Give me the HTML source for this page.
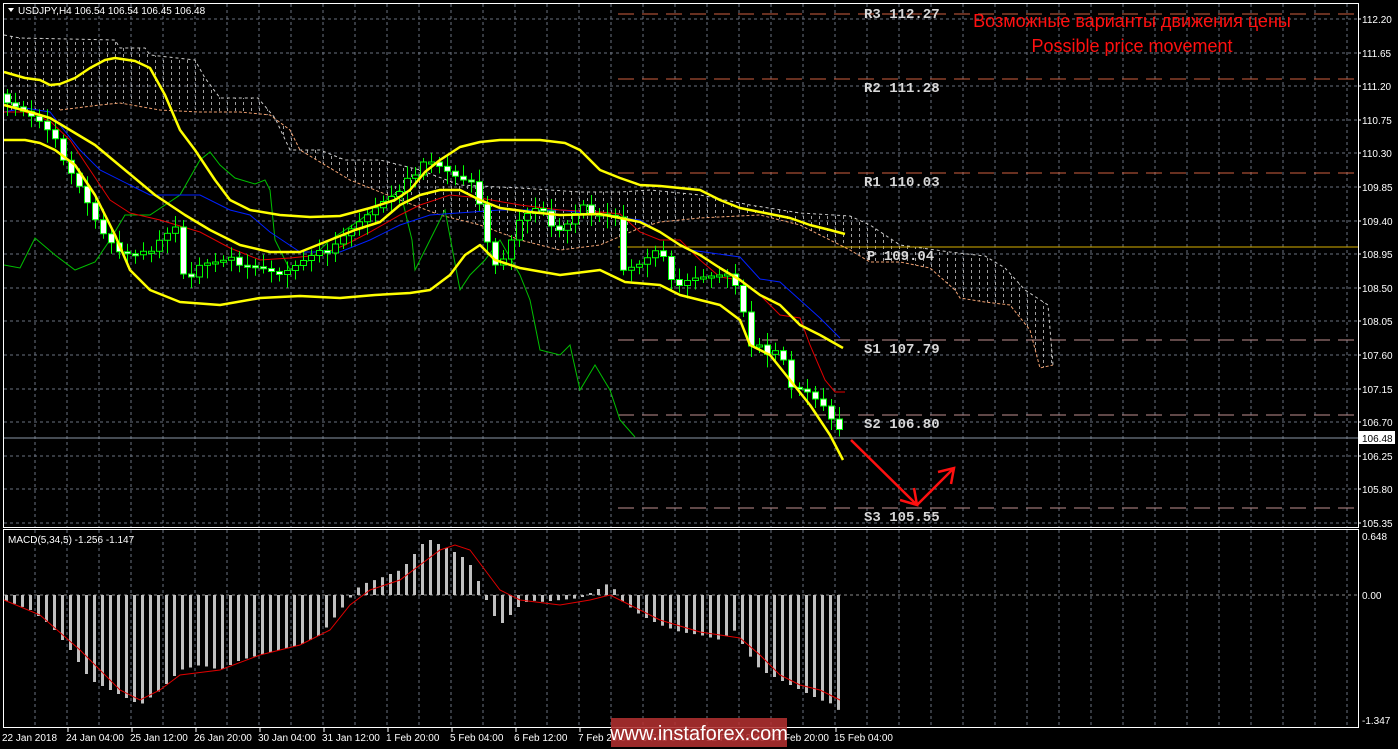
<!DOCTYPE html>
<html><head><meta charset="utf-8">
<style>
html,body{margin:0;padding:0;background:#000;width:1398px;height:749px;overflow:hidden}
svg{display:block}
text{font-family:"Liberation Sans",sans-serif}
.ax{fill:#fff;font-size:10px}
.pv{fill:#d8d8d8;font-family:"Liberation Mono",monospace;font-size:14px;font-weight:bold}
</style></head><body>
<svg id="s" width="1398" height="749" viewBox="0 0 1398 749" xmlns="http://www.w3.org/2000/svg">
<defs>
<pattern id="hatch" width="8" height="6" patternUnits="userSpaceOnUse">
<rect x="3" y="0" width="1" height="3" fill="#bbb"/>
</pattern>
</defs>
<rect width="1398" height="749" fill="#000"/>
<g id="grid"></g>
<polygon fill="url(#hatch)" opacity="0.85" points="4,35 20,38 115,40 120,48 145,48 150,55 195,60 205,78 220,98 258,98 275,118 290,150 320,150 345,160 380,160 420,170 460,185 520,188 580,192 620,192 650,190 700,195 750,205 800,213 850,216 870,225 900,245 950,252 985,256 1005,268 1025,290 1048,305 1053,365 1040,368 1030,330 1010,305 985,302 960,298 955,290 930,268 900,262 870,262 850,250 800,225 760,215 700,218 660,222 640,228 600,245 560,250 520,240 480,225 440,215 400,200 350,180 300,150 290,130 270,115 240,112 200,110 160,108 130,103 100,105 60,110 4,110"/>
<polyline fill="none" stroke="#f0a070" stroke-width="1" stroke-dasharray="3,2" points="60,110 100,105 120,103 160,110 200,112 240,112 270,115 290,130 300,150 350,180 400,200 440,215 480,225 520,240 560,250 600,245 640,228 660,222 700,218 760,215 800,225 850,250 870,262 900,262 930,268 955,290 960,298 985,302 1010,305 1030,330 1040,368 1053,365"/>
<polyline fill="none" stroke="#ccc" stroke-width="1" stroke-dasharray="3,3" points="4,35 20,38 115,40 120,48 145,48 150,55 195,60 205,78 220,98 258,98 275,118 290,150 320,150 345,160 380,160 420,170 460,185 520,188 580,192 620,192 650,190 700,195 750,205 800,213 850,216 870,225 900,245 950,252 985,256 1005,268 1025,290 1048,305 1053,365"/>
<g stroke-width="1">
<line x1="618" y1="14" x2="1358" y2="14" stroke="#d06040" stroke-dasharray="16,8"/>
<line x1="618" y1="79" x2="1358" y2="79" stroke="#d06040" stroke-dasharray="16,8"/>
<line x1="618" y1="173" x2="1358" y2="173" stroke="#d06040" stroke-dasharray="16,8"/>
<line x1="618" y1="247" x2="1358" y2="247" stroke="#d8b000"/>
<line x1="618" y1="340" x2="1358" y2="340" stroke="#c09090" stroke-dasharray="16,8"/>
<line x1="618" y1="415" x2="1358" y2="415" stroke="#c09090" stroke-dasharray="16,8"/>
<line x1="618" y1="508" x2="1358" y2="508" stroke="#c09090" stroke-dasharray="16,8"/>
</g>
<line x1="4" y1="438" x2="1358" y2="438" stroke="#8a96a6" stroke-width="1"/>
<polyline fill="none" stroke="#00c000" stroke-width="1" points="4,265 20,268 35,238 55,255 75,270 95,262 110,240 125,215 150,215 180,195 200,160 210,152 220,165 235,178 255,184 265,180 270,190 275,240 290,270 310,260 330,240 360,220 400,190 412,240 415,270 430,240 445,210 460,290 470,275 485,260 500,240 520,275 530,300 540,350 560,355 570,345 580,390 595,365 610,390 620,420 635,437"/>
<polyline fill="none" stroke="#0020ff" stroke-width="1" points="4,112 25,108 50,112 60,125 80,150 100,170 130,185 150,195 180,195 200,195 230,210 250,215 270,232 300,252 340,252 370,240 400,225 430,215 500,210 560,210 600,215 640,220 690,250 740,257 760,279 780,282 800,300 820,318 840,338"/>
<polyline fill="none" stroke="#e00000" stroke-width="1" points="4,112 25,112 50,121 70,140 90,170 110,200 130,213 160,220 200,232 230,248 260,260 290,258 320,255 345,245 370,232 400,215 420,205 450,195 480,198 520,205 560,210 600,212 620,214 640,232 660,240 680,240 700,260 720,277 740,280 760,295 780,315 800,318 810,345 825,380 835,392 845,392"/>
<g id="candles"></g>
<g fill="none" stroke="#ffff00" stroke-width="2.5" stroke-linejoin="round">
<polyline points="4,72 25,78 40,80 50,85 60,84 75,78 90,68 105,60 115,58 135,61 150,68 165,95 180,130 195,150 215,180 230,200 250,210 280,215 310,217 340,216 370,208 395,200 410,190 425,172 440,160 460,147 480,142 500,140 540,140 565,143 580,150 600,170 620,178 640,185 660,186 680,188 700,190 720,200 740,208 770,214 790,218 810,225 830,230 845,234"/>
<polyline points="4,105 30,112 50,118 70,130 95,145 125,170 155,195 185,215 210,230 240,245 270,252 300,252 330,240 355,230 380,222 400,205 420,195 440,190 460,190 480,200 500,208 530,212 560,215 600,214 640,222 660,232 680,245 700,255 720,268 740,280 760,295 780,305 800,325 820,335 843,348"/>
<polyline points="4,140 25,140 40,143 55,150 75,165 95,195 115,235 130,270 150,290 180,302 220,305 260,298 300,296 340,298 375,295 410,293 430,290 450,275 465,255 480,245 495,260 520,268 560,275 600,270 625,282 660,285 680,295 700,300 720,305 740,320 750,345 770,355 790,380 810,405 830,435 843,460"/>
</g>
<rect x="3.5" y="3.5" width="1355" height="524" fill="none" stroke="#fff" stroke-width="1"/>
<rect x="3.5" y="529.5" width="1355" height="198" fill="none" stroke="#fff" stroke-width="1"/>
<line x1="4" y1="595" x2="1358" y2="595" stroke="#8a8a8a" stroke-dasharray="3,3"/>
<g id="macd"></g>
<polyline fill="none" stroke="#e00000" stroke-width="1" points="4,600 40,615 80,650 120,690 140,700 160,690 180,675 220,670 260,655 300,645 330,630 350,605 370,590 400,580 420,565 440,550 455,545 470,550 485,570 500,590 520,600 560,605 590,600 610,595 630,605 660,620 700,632 740,638 760,655 780,675 800,685 820,690 840,700"/>
<polygon points="8,8 14,8 11,12" fill="#fff"/>
<text x="18" y="14" class="ax">USDJPY,H4  106.54 106.54 106.45 106.48</text>
<text x="8" y="543" class="ax">MACD(5,34,5) -1.256 -1.147</text>
<text x="864" y="18" class="pv">R3 112.27</text>
<text x="864" y="92" class="pv">R2 111.28</text>
<text x="864" y="186" class="pv">R1 110.03</text>
<text x="867" y="260" class="pv">P 109.04</text>
<text x="864" y="353" class="pv">S1 107.79</text>
<text x="864" y="428" class="pv">S2 106.80</text>
<text x="864" y="521" class="pv">S3 105.55</text>
<text x="1132" y="27" fill="#ff1010" font-size="18" text-anchor="middle">Возможные варианты движения цены</text>
<text x="1132" y="52" fill="#ff1010" font-size="18" text-anchor="middle">Possible price movement</text>
<g stroke="#ff1010" stroke-width="2.5" fill="none" stroke-linejoin="miter">
<line x1="851" y1="440" x2="917" y2="505"/>
<polyline points="900,500 917,505 914,488"/>
<line x1="917" y1="505" x2="954" y2="468"/>
<polyline points="938,472 954,468 951,484"/>
</g>
<g id="axis" class="ax"></g>
<rect x="1359" y="431" width="36" height="13" fill="#fff"/>
<text x="1362" y="442" font-size="10" fill="#000">106.48</text>
<text x="1362" y="540" class="ax">0.648</text>
<text x="1362" y="599" class="ax">0.00</text>
<text x="1362" y="724" class="ax">-1.347</text>
<g id="time" class="ax"></g>
<rect x="611" y="718" width="176" height="29" fill="#b03030" opacity="0.88"/>
<text x="699" y="740" fill="#fff" font-size="20" text-anchor="middle">www.instaforex.com</text>
</svg>
<script>
(function(){
var NS="http://www.w3.org/2000/svg";
function el(p,t,a,txt){var e=document.createElementNS(NS,t);for(var k in a)e.setAttribute(k,a[k]);if(txt)e.textContent=txt;document.getElementById(p).appendChild(e);return e;}
for(var x=35;x<1358;x+=32){el("grid","line",{x1:x,y1:4,x2:x,y2:527,stroke:"#6a7280","stroke-dasharray":"3,3"});el("grid","line",{x1:x,y1:530,x2:x,y2:727,stroke:"#6a7280","stroke-dasharray":"3,3"});}
var prices=["112.20","111.65","111.20","110.75","110.30","109.85","109.40","108.95","108.50","108.05","107.60","107.15","106.70","106.25","105.80","105.35"];
for(var i=0;i<prices.length;i++){var y=Math.round(19+i*33.6);el("grid","line",{x1:4,y1:y,x2:1358,y2:y,stroke:"#6a7280","stroke-dasharray":"3,3"});el("axis","text",{x:1362,y:y+4},prices[i]);el("axis","line",{x1:1358,y1:y,x2:1361,y2:y,stroke:"#fff"});}
var tl=["22 Jan 2018","24 Jan 04:00","25 Jan 12:00","26 Jan 20:00","30 Jan 04:00","31 Jan 12:00","1 Feb 20:00","5 Feb 04:00","6 Feb 12:00","7 Feb 20:00","9 Feb 04:00","12 Feb 12:00","13 Feb 20:00","15 Feb 04:00"];
for(var i=0;i<tl.length;i++){var x=i==0?2:66+64*(i-1);el("time","text",{x:x,y:741},tl[i]);if(i>0)el("time","line",{x1:x+2,y1:728,x2:x+2,y2:732,stroke:"#fff"});}
var path=[[4,100],[20,110],[40,125],[60,150],[80,185],[100,230],[120,255],[140,260],[160,235],[175,225],[185,285],[200,265],[220,265],[240,260],[260,265],[280,275],[300,265],[320,255],[340,235],[360,220],[380,205],[400,195],[415,170],[425,155],[440,165],[460,180],[475,185],[485,240],[495,270],[505,250],[520,215],[540,205],[555,235],[570,225],[580,210],[600,210],[615,215],[620,270],[640,265],[660,250],[670,285],[690,275],[710,275],[730,275],[740,300],[750,350],[765,350],[780,345],[790,385],[805,390],[815,400],[825,410],[835,430],[843,437]];
function at(x){for(var i=1;i<path.length;i++){if(x<=path[i][0]){var a=path[i-1],b=path[i];return a[1]+(b[1]-a[1])*(x-a[0])/(b[0]-a[0]);}}return path[path.length-1][1];}
var prev=at(4)-6;
for(var x=7;x<=843;x+=8){var c=at(x)+((x*37)%11-5);var o=prev;var hi=Math.min(o,c)-4-((x*13)%9);var lo=Math.max(o,c)+4+((x*7)%10);
el("candles","line",{x1:x+0.5,y1:hi,x2:x+0.5,y2:lo,stroke:"#00ff00"});
var tp=Math.min(o,c),h=Math.max(2,Math.abs(c-o));
el("candles","rect",{x:x-2.5,y:tp,width:6,height:h,fill:c>o?"#fff":"#000",stroke:"#00ff00","stroke-width":1});prev=c;}
var mp=[[4,600],[30,610],[50,625],[70,650],[90,680],[110,690],[130,700],[140,705],[160,690],[180,670],[200,665],[220,670],[240,660],[260,655],[280,650],[300,645],[320,635],[340,610],[360,585],[380,578],[400,570],[410,560],[420,545],[430,540],[440,545],[450,550],[460,555],[470,565],[480,585],[490,610],[500,625],[510,615],[520,605],[530,600],[540,602],[560,600],[580,598],[600,588],[610,582],[620,600],[640,615],[660,625],[680,632],[700,635],[720,640],[735,630],[745,650],[760,670],[780,680],[800,690],[820,700],[835,705],[843,718]];
for(var x=6;x<=845;x+=8){var v;for(var i=1;i<mp.length;i++){if(x<=mp[i][0]){var a=mp[i-1],b=mp[i];v=a[1]+(b[1]-a[1])*(x-a[0])/(b[0]-a[0]);break;}}if(v===undefined)v=718;
el("macd","rect",{x:x-1,y:Math.min(595,v),width:3,height:Math.max(1,Math.abs(v-595)),fill:"#c0c0c0"});}
})();
</script>
</body></html>
